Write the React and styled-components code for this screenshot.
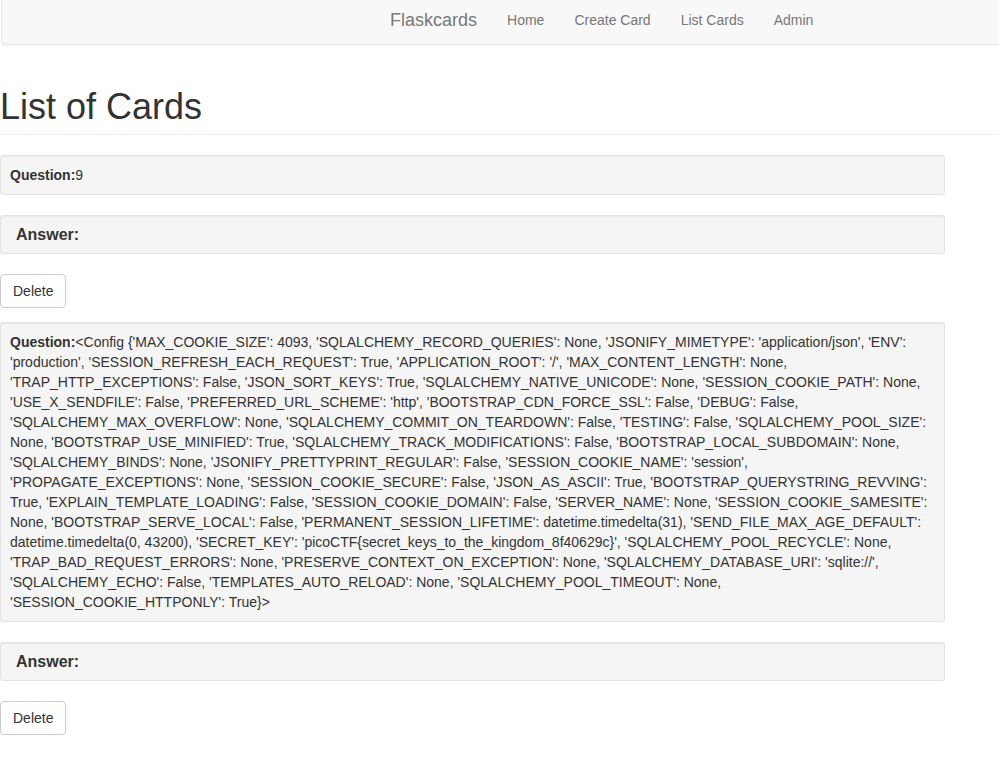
import React from 'react';
import styled, { createGlobalStyle } from 'styled-components';

const configLines = [
  "<Config {'MAX_COOKIE_SIZE': 4093, 'SQLALCHEMY_RECORD_QUERIES': None, 'JSONIFY_MIMETYPE': 'application/json', 'ENV':",
  "'production', 'SESSION_REFRESH_EACH_REQUEST': True, 'APPLICATION_ROOT': '/', 'MAX_CONTENT_LENGTH': None,",
  "'TRAP_HTTP_EXCEPTIONS': False, 'JSON_SORT_KEYS': True, 'SQLALCHEMY_NATIVE_UNICODE': None, 'SESSION_COOKIE_PATH': None,",
  "'USE_X_SENDFILE': False, 'PREFERRED_URL_SCHEME': 'http', 'BOOTSTRAP_CDN_FORCE_SSL': False, 'DEBUG': False,",
  "'SQLALCHEMY_MAX_OVERFLOW': None, 'SQLALCHEMY_COMMIT_ON_TEARDOWN': False, 'TESTING': False, 'SQLALCHEMY_POOL_SIZE':",
  "None, 'BOOTSTRAP_USE_MINIFIED': True, 'SQLALCHEMY_TRACK_MODIFICATIONS': False, 'BOOTSTRAP_LOCAL_SUBDOMAIN': None,",
  "'SQLALCHEMY_BINDS': None, 'JSONIFY_PRETTYPRINT_REGULAR': False, 'SESSION_COOKIE_NAME': 'session',",
  "'PROPAGATE_EXCEPTIONS': None, 'SESSION_COOKIE_SECURE': False, 'JSON_AS_ASCII': True, 'BOOTSTRAP_QUERYSTRING_REVVING':",
  "True, 'EXPLAIN_TEMPLATE_LOADING': False, 'SESSION_COOKIE_DOMAIN': False, 'SERVER_NAME': None, 'SESSION_COOKIE_SAMESITE':",
  "None, 'BOOTSTRAP_SERVE_LOCAL': False, 'PERMANENT_SESSION_LIFETIME': datetime.timedelta(31), 'SEND_FILE_MAX_AGE_DEFAULT':",
  "datetime.timedelta(0, 43200), 'SECRET_KEY': 'picoCTF{secret_keys_to_the_kingdom_8f40629c}', 'SQLALCHEMY_POOL_RECYCLE': None,",
  "'TRAP_BAD_REQUEST_ERRORS': None, 'PRESERVE_CONTEXT_ON_EXCEPTION': None, 'SQLALCHEMY_DATABASE_URI': 'sqlite://',",
  "'SQLALCHEMY_ECHO': False, 'TEMPLATES_AUTO_RELOAD': None, 'SQLALCHEMY_POOL_TIMEOUT': None,",
  "'SESSION_COOKIE_HTTPONLY': True}>",
];

const cards = [
  { id: 1, question: ['9'] },
  { id: 2, question: configLines },
];

const navLinks = ['Home', 'Create Card', 'List Cards', 'Admin'];

export default function App() {
  return (
    <>
      <GlobalStyle />
      <Navbar>
        <NavInner>
          <Brand href="#">Flaskcards</Brand>
          {navLinks.map((link) => (
            <NavLink key={link} href="#">{link}</NavLink>
          ))}
        </NavInner>
      </Navbar>
      <PageHeader>
        <Title>List of Cards</Title>
      </PageHeader>
      <CardList>
        {cards.map((card) => (
          <Card key={card.id}>
            <QuestionWell>
              {card.question.map((line, index) => (
                <Line key={index}>
                  {index === 0 && <b>Question:</b>}
                  {line}
                </Line>
              ))}
            </QuestionWell>
            <AnswerWell>
              <b>Answer:</b>
            </AnswerWell>
            <DeleteButton type="button">Delete</DeleteButton>
          </Card>
        ))}
      </CardList>
    </>
  );
}

const GlobalStyle = createGlobalStyle`
  * { box-sizing: border-box; }
  body {
    margin: 0;
    background: #fff;
    color: #333;
    font-family: "Liberation Sans", Arial, Helvetica, sans-serif;
    font-size: 14px;
    line-height: 20px;
    overflow-x: hidden;
  }
`;

const Navbar = styled.nav`
  height: 45px;
  background-color: #f8f8f8;
  border: 1px solid #e7e7e7;
  border-top: none;
  border-right: none;
  border-radius: 0 0 0 4px;
  margin-left: 1px;
`;

const NavInner = styled.div`
  display: flex;
  align-items: flex-start;
  padding-left: 373px;
`;

const Brand = styled.a`
  padding: 10px 15px;
  font-size: 18px;
  line-height: 20px;
  color: #777;
  text-decoration: none;
`;

const NavLink = styled.a`
  padding: 10px 15px;
  font-size: 14px;
  line-height: 20px;
  color: #777;
  text-decoration: none;
`;

const PageHeader = styled.div`
  margin-top: 42px;
  padding-bottom: 7px;
  border-bottom: 1px solid #eee;
`;

const Title = styled.h1`
  margin: 0;
  font-size: 36px;
  font-weight: 500;
  line-height: 1.1;
  color: #333;
`;

const CardList = styled.div`
  width: 945px;
  padding-top: 20px;
`;

const Card = styled.div`
  margin-bottom: 14px;
`;

const QuestionWell = styled.div`
  padding: 9px;
  margin-bottom: 20px;
  background-color: #f5f5f5;
  border: 1px solid #e3e3e3;
  border-radius: 3px;
  box-shadow: inset 0 1px 1px rgba(0, 0, 0, 0.05);
`;

const Line = styled.div`
  white-space: nowrap;
`;

const AnswerWell = styled.div`
  padding: 8px 15px;
  margin-bottom: 20px;
  font-size: 16px;
  line-height: 21px;
  background-color: #f5f5f5;
  border: 1px solid #e3e3e3;
  border-radius: 3px;
  box-shadow: inset 0 1px 1px rgba(0, 0, 0, 0.05);
`;

const DeleteButton = styled.button`
  display: block;
  height: 34px;
  padding: 6px 12px;
  font-family: inherit;
  font-size: 14px;
  line-height: 20px;
  color: #333;
  background-color: #fff;
  border: 1px solid #ccc;
  border-radius: 4px;
  cursor: pointer;
`;
